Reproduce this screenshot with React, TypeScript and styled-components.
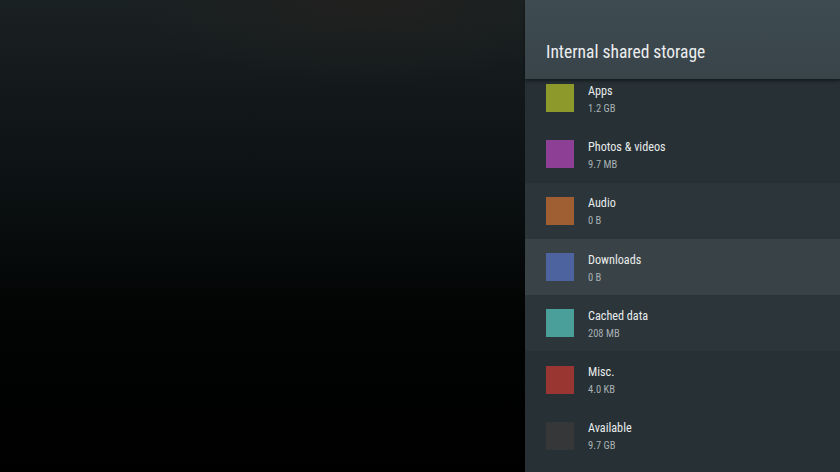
import React from "react";
import styled, { createGlobalStyle } from "styled-components";

const Global = createGlobalStyle`
  html, body { margin: 0; padding: 0; background: #000; }
  body { font-family: Roboto, "Noto Sans", sans-serif; -webkit-font-smoothing: antialiased; }
  #root { width: 840px; height: 472px; }
`;

const Screen = styled.div`
  display: flex;
  width: 840px;
  height: 472px;
  overflow: hidden;
`;

const Backdrop = styled.div`
  flex: 1;
  background:
    radial-gradient(ellipse 45% 18% at 70% 0%, rgba(36, 32, 29, 0.7), rgba(0, 0, 0, 0) 100%),
    linear-gradient(to bottom, #1a2123 0%, #111719 25%, #090d0e 48%, #020303 68%, #000 100%);
`;

const Panel = styled.div`
  width: 315px;
  height: 472px;
  display: flex;
  flex-direction: column;
  background: #263035;
`;

const Header = styled.div`
  height: 79px;
  flex: none;
  padding: 42px 0 0 21px;
  box-sizing: border-box;
  background: linear-gradient(to bottom, #3e4b51, #38444a);
  box-shadow: 0 2px 3px rgba(0, 0, 0, 0.45);
  position: relative;
  z-index: 2;
`;

const Title = styled.h1`
  margin: 0;
  font-size: 17.5px;
  line-height: 20px;
  font-weight: 400;
  font-stretch: 85%;
  color: #eceeef;
`;

const List = styled.div`
  flex: 1;
  overflow: hidden;
  position: relative;
  z-index: 1;
`;

const Rows = styled.div`
  margin-top: -9px;
  display: flex;
  flex-direction: column;
`;

const Row = styled.div<{ $tone: "normal" | "near" | "focus" }>`
  height: 56.3px;
  flex: none;
  display: flex;
  align-items: center;
  gap: 14px;
  padding-left: 21px;
  background: ${(p) =>
    p.$tone === "focus" ? "#394347" : p.$tone === "near" ? "#2b353a" : "#263035"};
`;

const Swatch = styled.div<{ $color: string }>`
  width: 28px;
  height: 28px;
  flex: none;
  background: ${(p) => p.$color};
`;

const Texts = styled.div`
  display: flex;
  flex-direction: column;
  gap: 4px;
  margin-top: 2px;
`;

const Name = styled.div`
  font-size: 12.2px;
  line-height: 14px;
  font-stretch: 85%;
  color: #e9ecec;
`;

const Size = styled.div`
  font-size: 10.5px;
  line-height: 13px;
  font-stretch: 85%;
  color: #a9b0b3;
`;

const items: { name: string; size: string; color: string; tone: "normal" | "near" | "focus" }[] = [
  { name: "Apps", size: "1.2 GB", color: "#8d9a2b", tone: "normal" },
  { name: "Photos & videos", size: "9.7 MB", color: "#8c3f94", tone: "normal" },
  { name: "Audio", size: "0 B", color: "#a05f33", tone: "near" },
  { name: "Downloads", size: "0 B", color: "#4c63a0", tone: "focus" },
  { name: "Cached data", size: "208 MB", color: "#4a9f9a", tone: "near" },
  { name: "Misc.", size: "4.0 KB", color: "#9a3632", tone: "normal" },
  { name: "Available", size: "9.7 GB", color: "#363738", tone: "normal" },
];

export default function App() {
  return (
    <>
      <Global />
      <Screen>
        <Backdrop />
        <Panel>
          <Header>
            <Title>Internal shared storage</Title>
          </Header>
          <List>
            <Rows>
              {items.map((it) => (
                <Row key={it.name} $tone={it.tone}>
                  <Swatch $color={it.color} />
                  <Texts>
                    <Name>{it.name}</Name>
                    <Size>{it.size}</Size>
                  </Texts>
                </Row>
              ))}
            </Rows>
          </List>
        </Panel>
      </Screen>
    </>
  );
}
